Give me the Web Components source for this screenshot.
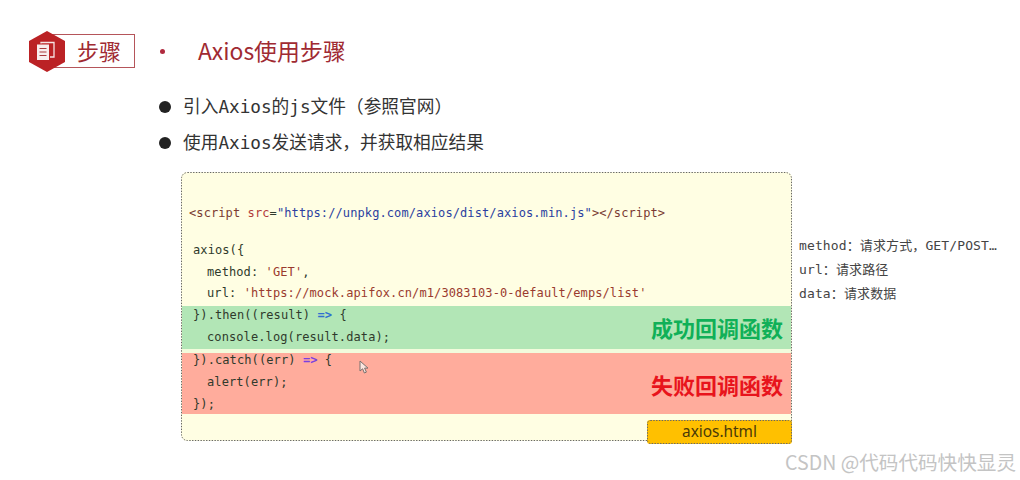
<!DOCTYPE html>
<html lang="zh">
<head>
<meta charset="utf-8">
<title>Axios使用步骤</title>
<style>
  html, body { margin: 0; background: #fff; }
  body { width: 1020px; height: 480px; overflow: hidden; position: relative; }
</style>
</head>
<body>
<slide-header>Axios使用步骤</slide-header>
<bullet-list>
  <li>引入Axios的js文件（参照官网）</li>
  <li>使用Axios发送请求，并获取相应结果</li>
</bullet-list>
<demo-row>
  <code-panel filename="axios.html">
    <code-line slot="head" x="0"><i class="t">&lt;script</i> <i class="a">src</i>=<i class="s">"https://unpkg.com/axios/dist/axios.min.js"</i><i class="t">&gt;&lt;/script&gt;</i></code-line>
    <code-line slot="plain" x="4">axios({</code-line>
    <code-line slot="plain" x="18">method: <i class="r">'GET'</i>,</code-line>
    <code-line slot="plain" x="18">url: <i class="r">'https://mock.apifox.cn/m1/3083103-0-default/emps/list'</i></code-line>
    <code-block slot="ok" tone="ok" label="成功回调函数">
      <code-line x="4">}).then((result) <i class="o">=&gt;</i> {</code-line>
      <code-line x="18">console.log(result.data);</code-line>
    </code-block>
    <code-block slot="fail" tone="fail" label="失败回调函数">
      <code-line x="4">}).catch((err) <i class="p">=&gt;</i> {</code-line>
      <code-line x="18">alert(err);</code-line>
      <code-line x="4">});</code-line>
    </code-block>
  </code-panel>
  <side-notes>
    <div>method：请求方式，GET/POST…</div>
    <div>url：请求路径</div>
    <div>data：请求数据</div>
  </side-notes>
</demo-row>
<mouse-cursor></mouse-cursor>
<water-mark>CSDN @代码代码快快显灵</water-mark>

<script>
const CJK = '"Noto Sans CJK SC", sans-serif';
const MONO = '"DejaVu Sans Mono", "Noto Sans CJK SC", monospace';

// browsers draw a 1px dotted border with a radius as nearly solid, so the frame is an svg
const dottedFrame = (w, h, r) => `
  <svg class="frame" width="${w}" height="${h}" viewBox="0 0 ${w} ${h}">
    <rect x=".5" y=".5" width="${w - 1}" height="${h - 1}" rx="${r}" fill="none" stroke="#666" stroke-dasharray="1.4 1.4"/>
  </svg>`;

class SlideHeader extends HTMLElement {
  constructor() {
    super();
    this.attachShadow({mode: 'open'});
    this.shadowRoot.innerHTML = `
      <style>
        :host { display: flex; align-items: center; height: 42px; padding: 30px 0 0 29px; font-family: ${CJK}; color: #a8323a; }
        .badge { display: flex; align-items: center; width: 105px; height: 41px; }
        .hex { width: 36px; height: 41px; flex: none; position: relative; z-index: 1; }
        .label { margin-left: -15px; width: 85px; height: 34px; flex: none; box-sizing: border-box; border: 1.5px solid #b5555a; background: #fff; font-size: 22px; line-height: 30px; padding-left: 26px; color: #a02a32; }
        .dot { width: 5px; height: 5px; border-radius: 50%; background: #b02a3e; margin-left: 26px; }
        h1 { margin: -2px 0 0 33px; font-size: 22.9px; font-weight: 400; line-height: 42px; color: #a02a32; }
      </style>
      <div class="badge">
        <svg class="hex" viewBox="0 0 36 41">
          <path d="M18 0 36 10V31L18 41 0 31V10Z" fill="#bb2225"/>
          <path d="M12 12.5V11.5H25V26H21" fill="none" stroke="#f6e4e4" stroke-width="1.3"/>
          <rect x="8" y="13.5" width="12" height="15.5" fill="#f8eeee"/>
          <path d="M10.5 17.5h7M10.5 21h7M10.5 24.5h7" stroke="#a83a3c" stroke-width="1.1"/>
        </svg>
        <div class="label">步骤</div>
      </div>
      <span class="dot"></span>
      <h1><slot></slot></h1>
    `;
  }
}

class BulletList extends HTMLElement {
  constructor() {
    super();
    this.attachShadow({mode: 'open'});
    this.shadowRoot.innerHTML = `
      <style>
        :host { display: block; margin: 17px 0 0 159px; }
        ::slotted(li) { display: flex; align-items: center; height: 36px; list-style: none; font: 17.7px/36px ${MONO}; color: #333; }
        ::slotted(li)::before { content: ""; width: 12px; height: 12px; border-radius: 50%; background: #222; margin-right: 12px; }
      </style>
      <slot></slot>
    `;
  }
}

class DemoRow extends HTMLElement {
  constructor() {
    super();
    this.attachShadow({mode: 'open'});
    this.shadowRoot.innerHTML = `
      <style>
        :host { display: flex; gap: 7px; margin: 11px 0 0 181px; }
      </style>
      <slot></slot>
    `;
  }
}

class CodePanel extends HTMLElement {
  constructor() {
    super();
    this.attachShadow({mode: 'open'});
    this.shadowRoot.innerHTML = `
      <style>
        :host { display: block; position: relative; width: 611px; height: 269px; box-sizing: border-box; padding: 1px; background: #fffee3; border-radius: 6px; }
        .frame { position: absolute; left: 0; top: 0; }
        .head { padding: 30px 0 0 7px; height: 36px; }
        .plain { padding: 1px 0 0 7px; height: 66px; }
        .gap { height: 4px; background: #f2fbdc; }
        .tab { position: absolute; right: 0; bottom: -3px; width: 145px; height: 24px; background: #ffc000; border-radius: 3px; text-align: center; font: 15.4px/23px "Noto Sans", sans-serif; color: #4a3a08; }
      </style>
      <div class="head"><slot name="head"></slot></div>
      <div class="plain"><slot name="plain"></slot></div>
      <slot name="ok"></slot>
      <div class="gap"></div>
      <slot name="fail"></slot>
      ${dottedFrame(611, 269, 6)}
      <div class="tab"><span class="name"></span>${dottedFrame(145, 24, 3)}</div>
    `;
  }
  connectedCallback() {
    this.shadowRoot.querySelector('.name').textContent = this.getAttribute('filename');
  }
}

class CodeLine extends HTMLElement {
  constructor() {
    super();
    this.attachShadow({mode: 'open'});
    this.shadowRoot.innerHTML = `
      <style>
        :host { display: block; height: 21.7px; font: 12px/21.7px ${MONO}; letter-spacing: 0.1px; color: #2f3a2c; white-space: nowrap; }
        ::slotted(i) { font-style: normal; }
        ::slotted(i.t) { color: #7a3b32; }
        ::slotted(i.a) { color: #b23a3a; }
        ::slotted(i.s) { color: #2b3fa0; }
        ::slotted(i.r) { color: #9a3a2e; }
        ::slotted(i.o) { color: #2f6fd0; font-weight: 700; }
        ::slotted(i.p) { color: #7a3fe0; font-weight: 700; }
      </style>
      <slot></slot>
    `;
  }
  connectedCallback() {
    this.style.paddingLeft = this.getAttribute('x') + 'px';
  }
}

class CodeBlock extends HTMLElement {
  constructor() {
    super();
    this.attachShadow({mode: 'open'});
    this.shadowRoot.innerHTML = `
      <style>
        :host { display: flex; justify-content: space-between; align-items: center; padding-left: 7px; padding-right: 8px; }
        :host([tone="ok"]) { background: #b2e6b6; height: 43px; --label: #10b058; --shift: -2px; }
        :host([tone="fail"]) { background: #ffac9c; height: 61px; --label: #e8141c; --shift: 0px; }
        .lines { margin-top: -1px; }
        .label { font: 700 22px/1 ${CJK}; color: var(--label); margin-top: var(--shift); }
      </style>
      <div class="lines"><slot></slot></div>
      <div class="label"></div>
    `;
  }
  connectedCallback() {
    this.shadowRoot.querySelector('.label').textContent = this.getAttribute('label');
  }
}

class SideNotes extends HTMLElement {
  constructor() {
    super();
    this.attachShadow({mode: 'open'});
    this.shadowRoot.innerHTML = `
      <style>
        :host { display: block; padding-top: 62px; font: 13px/24px ${MONO}; letter-spacing: 0.12px; color: #444; white-space: nowrap; }
      </style>
      <slot></slot>
    `;
  }
}

class MouseCursor extends HTMLElement {
  constructor() {
    super();
    this.attachShadow({mode: 'open'});
    this.shadowRoot.innerHTML = `
      <style>
        :host { position: absolute; left: 359px; top: 360px; width: 11px; height: 14px; }
        svg { display: block; }
      </style>
      <svg width="11" height="14" viewBox="0 0 11 14">
        <path d="M1 1v10l2.6-2.2L5.4 13l2-.9-1.8-4h3.4Z" fill="#fbe6e0" stroke="#77706e" stroke-width="1"/>
      </svg>
    `;
  }
}

class WaterMark extends HTMLElement {
  constructor() {
    super();
    this.attachShadow({mode: 'open'});
    this.shadowRoot.innerHTML = `
      <style>
        :host { position: absolute; left: 785px; top: 449px; font: 19.6px/26px ${CJK}; color: #c4c4c4; white-space: nowrap; }
      </style>
      <slot></slot>
    `;
  }
}

customElements.define('slide-header', SlideHeader);
customElements.define('bullet-list', BulletList);
customElements.define('demo-row', DemoRow);
customElements.define('code-panel', CodePanel);
customElements.define('code-line', CodeLine);
customElements.define('code-block', CodeBlock);
customElements.define('side-notes', SideNotes);
customElements.define('mouse-cursor', MouseCursor);
customElements.define('water-mark', WaterMark);
</script>
</body>
</html>
